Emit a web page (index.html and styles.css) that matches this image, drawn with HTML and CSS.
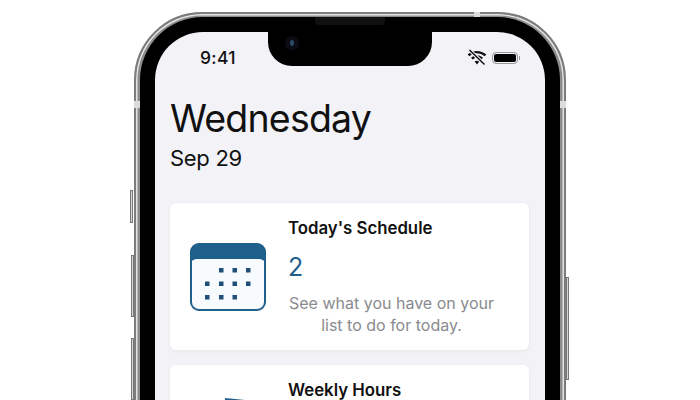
FILE: index.html
```html
<!DOCTYPE html>
<html lang="en">
<head>
    <meta charset="UTF-8">
    <meta name="viewport" content="width=device-width, initial-scale=1.0">
    <title>Wednesday</title>
    <link rel="stylesheet" href="styles.css">
</head>
<body>

<div class="page">
    <div class="phone">
        <span class="side-btn btn-mute"></span>
        <span class="side-btn btn-up"></span>
        <span class="side-btn btn-down"></span>
        <span class="side-btn btn-power"></span>
        <span class="band band-left"></span>
        <span class="band band-right"></span>
        <span class="band band-top"></span>

        <div class="rim">
            <div class="bezel">
                <div class="screen">
                    <div class="notch">
                        <span class="speaker"></span>
                        <span class="camera"></span>
                    </div>

                    <div class="status">
                        <span class="clock">9:41</span>
                        <div class="status-icons">
                            <svg class="wifi" width="20" height="17" viewBox="0 0 20 17">
                                <path d="M1.500 6.300C6 2 13.500 2 18.500 6.300" fill="none" stroke="#111" stroke-width="2.400"/>
                                <path d="M4.800 9.600C8 7 12 7 15.200 9.600" fill="none" stroke="#111" stroke-width="2.400"/>
                                <path d="M7.600 12.600C9.200 11.400 10.800 11.400 12.400 12.600L10 15.400Z" fill="#111"/>
                                <path d="M2.500 1L17.500 15.500" stroke="#f2f2f7" stroke-width="3.600"/>
                                <path d="M2.500 1L17.500 15.500" stroke="#111" stroke-width="1.500"/>
                            </svg>
                            <div class="battery"><span class="battery-fill"></span></div>
                        </div>
                    </div>

                    <div class="heading">
                        <h1>Wednesday</h1>
                        <p class="date">Sep 29</p>
                    </div>

                    <div class="card">
                        <div class="card-icon">
                            <svg width="76" height="68" viewBox="0 0 76 68">
                                <rect x="1" y="1" width="74" height="66" rx="8" fill="#f8fbfe" stroke="#1f5f8b" stroke-width="2"/>
                                <path d="M0.500 9a8.500 8.500 0 0 1 8.500-8.500h58a8.500 8.500 0 0 1 8.500 8.500v12.500a6 6 0 0 0-6-5.500h-63a6 6 0 0 0-6 5.500Z" fill="#1f5f8b"/>
                                <g fill="#1f4f78">
                                    <rect x="29" y="25" width="4.500" height="4.500"/>
                                    <rect x="42.500" y="25" width="4.500" height="4.500"/>
                                    <rect x="56" y="25" width="4.500" height="4.500"/>
                                    <rect x="15" y="38.500" width="4.500" height="4.500"/>
                                    <rect x="29" y="38.500" width="4.500" height="4.500"/>
                                    <rect x="42.500" y="38.500" width="4.500" height="4.500"/>
                                    <rect x="56" y="38.500" width="4.500" height="4.500"/>
                                    <rect x="15" y="52" width="4.500" height="4.500"/>
                                    <rect x="29" y="52" width="4.500" height="4.500"/>
                                    <rect x="42.500" y="52" width="4.500" height="4.500"/>
                                </g>
                            </svg>
                        </div>
                        <div class="card-body">
                            <h2>Today's Schedule</h2>
                            <div class="count">2</div>
                            <p class="desc">See what you have on your list to do for today.</p>
                        </div>
                    </div>

                    <div class="card">
                        <div class="card-icon card-icon-next">
                            <svg width="76" height="68" viewBox="0 0 76 68">
                                <path d="M35 1L55 3V12H35Z" fill="#1f5f8b"/>
                            </svg>
                        </div>
                        <div class="card-body">
                            <h2>Weekly Hours</h2>
                        </div>
                    </div>
                </div>
            </div>
        </div>
    </div>
</div>

</body>
</html>
```

FILE: styles.css
```css
body {
    margin: 0;
    background: #fff;
    font-family: 'Inter', 'Liberation Sans', sans-serif;
    color: #111;
}

.page {
    height: 388px;
    padding-top: 12px;
    display: flex;
    justify-content: center;
    overflow: hidden;
}

.phone {
    position: relative;
    width: 432px;
    height: 700px;
    flex-shrink: 0;
}

.rim {
    height: 100%;
    box-sizing: border-box;
    border: 2px solid #7c7c7c;
    border-radius: 68px;
    background: #8c8c8c;
    padding: 3px 4px;
    box-shadow: inset 0 0 0 1.5px #e4e4e4;
}

.bezel {
    height: 100%;
    box-sizing: border-box;
    background: #000;
    border-radius: 63px;
    padding: 15px;
}

.screen {
    position: relative;
    height: 100%;
    background: #f2f2f7;
    border-radius: 48px;
    padding: 0 15px;
    box-sizing: border-box;
}

/* notch */
.notch {
    position: absolute;
    top: 0;
    left: 113px;
    width: 164px;
    height: 34px;
    background: #000;
    border-radius: 0 0 24px 24px;
}

.speaker {
    position: absolute;
    top: -15px;
    left: 47px;
    width: 70px;
    height: 8px;
    background: #111;
    border-radius: 0 0 4px 4px;
}

.camera {
    position: absolute;
    top: 4px;
    left: 17px;
    width: 14px;
    height: 14px;
    border-radius: 50%;
    background: #0b0c14;
}

.camera::after {
    content: "";
    position: absolute;
    left: 5px;
    top: 4px;
    width: 4px;
    height: 6px;
    border-radius: 50%;
    background: #2a4a6a;
}

/* status bar */
.status {
    display: flex;
    justify-content: space-between;
    align-items: center;
    height: 25px;
    padding: 13px 12px 1px 30px;
}

.clock {
    font-size: 17.500px;
    font-weight: 500;
    letter-spacing: 0.3px;
}

.status-icons {
    display: flex;
    align-items: center;
    gap: 5px;
}

.battery {
    position: relative;
    width: 26px;
    height: 12px;
    box-sizing: border-box;
    border: 1px solid #9a9a9a;
    border-radius: 4px;
    padding: 1px;
}

.battery::after {
    content: "";
    position: absolute;
    right: -3px;
    top: 3px;
    width: 1px;
    height: 4px;
    background: #9a9a9a;
}

.battery-fill {
    display: block;
    height: 100%;
    background: #000;
    border-radius: 2px;
}

/* heading */
.heading {
    margin-top: 26px;
}

h1 {
    margin: 0;
    font-size: 37.500px;
    font-weight: 400;
    line-height: 44px;
    letter-spacing: -0.8px;
}

.date {
    margin: 4px 0 0;
    font-size: 22px;
    font-weight: 400;
    line-height: 26px;
    letter-spacing: -0.3px;
}

/* cards */
.card {
    display: flex;
    margin-top: 15px;
    width: 359px;
    box-sizing: border-box;
    height: 147px;
    background: #fff;
    border-radius: 6px;
    box-shadow: 0 1px 4px rgba(0, 0, 0, 0.06);
    padding: 14px 34px 0 20px;
}

.heading + .card {
    margin-top: 32px;
}

.card-icon {
    flex-shrink: 0;
    width: 76px;
    margin-right: 23px;
    padding-top: 26px;
}

.card-icon-next {
    padding-top: 18px;
}

.card-body {
    flex: 1;
    margin-left: -1px;
    text-align: center;
}

h2 {
    margin: 0;
    font-size: 16.800px;
    font-weight: 600;
    line-height: 22px;
    text-align: left;
}

.count {
    margin-top: 13px;
    font-size: 25px;
    font-weight: 400;
    line-height: 30px;
    color: #1f5f8b;
    text-align: left;
}

.desc {
    margin: 10px 0 0;
    font-size: 16px;
    font-weight: 400;
    line-height: 22px;
    color: #8a8a8e;
}

/* hardware bits */
.side-btn {
    position: absolute;
    width: 3px;
    background: #d6d6d6;
    border: 1px solid #777;
    box-sizing: border-box;
}

.btn-mute {
    left: -4px;
    top: 178px;
    height: 33px;
}

.btn-up {
    left: -3px;
    top: 243px;
    height: 62px;
}

.btn-down {
    left: -3px;
    top: 326px;
    height: 62px;
}

.btn-power {
    right: -3px;
    top: 265px;
    height: 103px;
}

.band {
    position: absolute;
    background: #dcdcdc;
    z-index: 1;
}

.band-left {
    left: 0;
    top: 89px;
    width: 6px;
    height: 7px;
}

.band-right {
    right: 0;
    top: 89px;
    width: 6px;
    height: 7px;
}

.band-top {
    left: 340px;
    top: 0;
    width: 6px;
    height: 5px;
}
```
